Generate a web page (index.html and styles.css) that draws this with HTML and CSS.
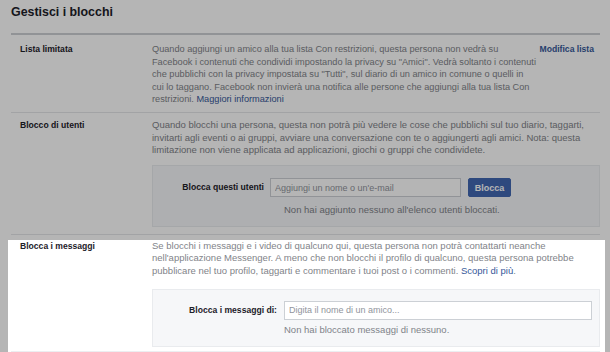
FILE: index.html
```html
<!DOCTYPE html>
<html lang="it">
<head>
    <meta charset="UTF-8">
    <meta name="viewport" content="width=device-width, initial-scale=1.0">
    <title>Gestisci i blocchi</title>
    <link rel="stylesheet" href="styles.css">
</head>
<body>
    <div class="content">
        <h1>Gestisci i blocchi</h1>

        <div class="row row-list">
            <div class="label">Lista limitata</div>
            <div class="desc">
                Quando aggiungi un amico alla tua lista Con restrizioni, questa persona non vedrà su<br>
                Facebook i contenuti che condividi impostando la privacy su "Amici". Vedrà soltanto i contenuti<br>
                che pubblichi con la privacy impostata su "Tutti", sul diario di un amico in comune o quelli in<br>
                cui lo taggano. Facebook non invierà una notifica alle persone che aggiungi alla tua lista Con<br>
                restrizioni. <a href="#">Maggiori informazioni</a>
            </div>
            <a class="edit-link" href="#">Modifica lista</a>
        </div>

        <div class="row row-block">
            <div class="label">Blocco di utenti</div>
            <div class="desc">
                Quando blocchi una persona, questa non potrà più vedere le cose che pubblichi sul tuo diario, taggarti,<br>
                invitarti agli eventi o ai gruppi, avviare una conversazione con te o aggiungerti agli amici. Nota: questa<br>
                limitazione non viene applicata ad applicazioni, giochi o gruppi che condividete.
                <div class="block-box users-box">
                    <label class="field-label" for="blockUser">Blocca questi utenti</label>
                    <div class="field">
                        <input type="text" id="blockUser" placeholder="Aggiungi un nome o un'e-mail">
                        <button>Blocca</button>
                    </div>
                    <div class="note">Non hai aggiunto nessuno all'elenco utenti bloccati.</div>
                </div>
            </div>
        </div>

        <div class="highlight">
            <div class="row row-block row-last">
                <div class="label">Blocca i messaggi</div>
                <div class="desc">
                    Se blocchi i messaggi e i video di qualcuno qui, questa persona non potrà contattarti neanche<br>
                    nell'applicazione Messenger. A meno che non blocchi il profilo di qualcuno, questa persona potrebbe<br>
                    pubblicare nel tuo profilo, taggarti e commentare i tuoi post o i commenti. <a href="#">Scopri di più</a>.
                    <div class="block-box messages-box">
                        <label class="field-label" for="blockMsg">Blocca i messaggi di:</label>
                        <div class="field">
                            <input type="text" id="blockMsg" placeholder="Digita il nome di un amico...">
                        </div>
                        <div class="note">Non hai bloccato messaggi di nessuno.</div>
                    </div>
                </div>
            </div>
        </div>
    </div>
</body>
</html>
```

FILE: styles.css
```css
body {
    margin: 0;
    background: #fff;
    font-family: "Liberation Sans", Arial, sans-serif;
    font-size: 9.2px;
    line-height: 12.5px;
    color: #1d2129;
    overflow: hidden;
}

a {
    color: #365899;
    text-decoration: none;
}

.content {
    margin-left: 11px;
    width: 589px;
}

h1 {
    margin: 0;
    padding: 4px 0 13px 0;
    font-size: 12.4px;
    line-height: 16px;
    font-weight: bold;
    color: #1d2129;
    border-bottom: 2px solid #cdd0d4;
}

.row {
    display: grid;
    grid-template-columns: 132px 1fr;
    padding: 8px 0 6px 9px;
    border-bottom: 1px solid #e5e6e9;
}

.row + .row {
    padding-top: 6.5px;
    padding-bottom: 7px;
}

.row-list {
    grid-template-columns: 132px 1fr auto;
}

.row-list .desc {
    white-space: nowrap;
}

.row-block .desc {
    font-size: 9.5px;
}

.label {
    font-weight: bold;
    font-size: 8.6px;
}

.desc {
    color: #7f8389;
}

.edit-link {
    padding-right: 6px;
    white-space: nowrap;
    font-weight: bold;
    font-size: 8.6px;
}

.block-box {
    display: grid;
    align-items: center;
    margin: 8.5px 0 0 0;
    padding: 12px 0 9px 0;
    background: #f6f7f9;
    border: 1px solid #e9ebee;
}

.users-box {
    grid-template-columns: 111px auto;
    column-gap: 6px;
}

.messages-box {
    margin-top: 11.5px;
    padding: 11px 7px 10px 0;
    grid-template-columns: 124px 1fr;
    column-gap: 7px;
}

.field-label {
    justify-self: end;
    font-weight: bold;
    font-size: 8.6px;
    color: #1d2129;
}

.field {
    display: flex;
    gap: 7px;
}

.note {
    grid-column: 2;
    margin-top: 7px;
}

.users-box .note {
    padding-left: 14px;
}

.messages-box .note {
    margin-top: 4px;
}

input[type="text"] {
    box-sizing: border-box;
    height: 19px;
    padding: 0 4px;
    border: 1px solid #ccd0d5;
    font-family: inherit;
    font-size: 9px;
    color: #1d2129;
    background: #fff;
}

input::placeholder {
    color: #90949c;
}

.users-box input[type="text"] {
    width: 191px;
}

.messages-box input[type="text"] {
    flex: 1;
}

button {
    height: 19px;
    width: 43px;
    padding: 0;
    background-color: #4267b2;
    border: 1px solid #4267b2;
    border-radius: 2px;
    color: #fff;
    font-family: inherit;
    font-size: 9px;
    font-weight: bold;
}

/* section in focus: everything else is dimmed */
.highlight {
    position: relative;
    z-index: 1;
    margin: 5px -5px 0 -3px;
    padding: 0 5px 0 3px;
    background: #fff;
    box-shadow: 0 0 0 2000px rgba(0, 0, 0, 0.29);
}

.row-last {
    padding: 0 0 4px 9px;
    border-bottom: 1px solid #eceef1;
}
```
